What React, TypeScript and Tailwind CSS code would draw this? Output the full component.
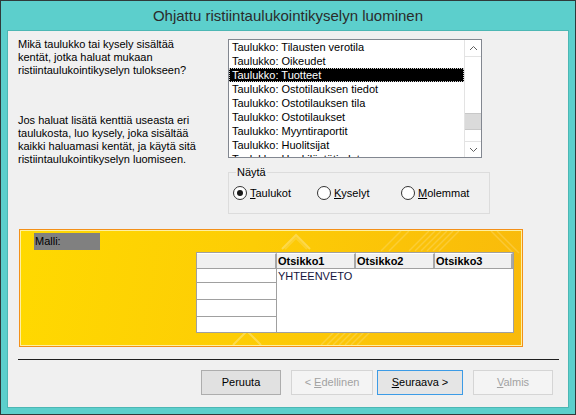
import React from "react";

const tables = [
  "Taulukko: Tilausten verotila",
  "Taulukko: Oikeudet",
  "Taulukko: Tuotteet",
  "Taulukko: Ostotilauksen tiedot",
  "Taulukko: Ostotilauksen tila",
  "Taulukko: Ostotilaukset",
  "Taulukko: Myyntiraportit",
  "Taulukko: Huolitsijat",
  "Taulukko: Henkilöstötiedot",
];

function Chevron({ up }: { up: boolean }) {
  return (
    <svg width="9" height="6" viewBox="0 0 9 6" className="block">
      <path
        d={up ? "M1 5 L4.5 1.5 L8 5" : "M1 1 L4.5 4.5 L8 1"}
        fill="none"
        stroke="#606060"
        strokeWidth="1"
      />
    </svg>
  );
}

function Radio({ checked, hot, rest }: { checked?: boolean; hot: string; rest: string }) {
  return (
    <div className="w-[84px] flex items-center">
      <div className="w-[14px] h-[14px] rounded-full border border-[#333333] bg-white flex items-center justify-center">
        {checked && <div className="w-[6px] h-[6px] rounded-full bg-[#1a1a1a]" />}
      </div>
      <span className="ml-[3px]">
        <u>{hot}</u>
        {rest}
      </span>
    </div>
  );
}

function Button({
  w,
  hot,
  before,
  after,
  kind,
}: {
  w: string;
  hot?: string;
  before?: string;
  after?: string;
  kind: "normal" | "default" | "disabled";
}) {
  const styles =
    kind === "disabled"
      ? "bg-[#f4f4f4] border-[#d5d5d5] text-[#a2a2a2]"
      : kind === "default"
      ? "bg-[#e5e5e5] border-[#3c9be6] text-black"
      : "bg-[#e1e1e1] border-[#adadad] text-black";
  return (
    <div className={`${w} h-[25px] border ${styles} flex items-center justify-center`}>
      <span>
        {before}
        {hot && <u>{hot}</u>}
        {after}
      </span>
    </div>
  );
}

export default function App() {
  return (
    <div className="w-[576px] h-[415px] bg-[#5ccfcc] border border-[#2f3a3a] px-[6px] pb-[6px] flex flex-col overflow-hidden font-['Liberation_Sans',Arial,sans-serif]">
      {/* title bar */}
      <div className="h-[29px] pt-[1px] flex items-center justify-center text-[15px] text-[#2b2b2b]">
        Ohjattu ristiintaulukointikyselyn luominen
      </div>

      {/* client area */}
      <div className="flex-1 border border-[#4cb7b4] bg-[#f0f0f0] flex flex-col text-[11px] text-black">
        <div className="pt-[8px] flex">
          <div className="w-[220px] pl-[10px] leading-[13px]">
            <p className="-mt-[1px]">
              Mikä taulukko tai kysely sisältää
              <br />
              kentät, jotka haluat mukaan
              <br />
              ristiintaulukointikyselyn tulokseen?
            </p>
            <p className="mt-[37px]">
              Jos haluat lisätä kenttiä useasta eri
              <br />
              taulukosta, luo kysely, joka sisältää
              <br />
              kaikki haluamasi kentät, ja käytä sitä
              <br />
              ristiintaulukointikyselyn luomiseen.
            </p>
          </div>

          <div className="w-[254px] flex flex-col">
            {/* list box */}
            <div className="h-[119px] border border-[#828790] bg-white flex">
              <div className="flex-1 overflow-hidden">
                {tables.map((t, i) =>
                  i === 2 ? (
                    <div
                      key={t}
                      className="h-[14px] leading-[12px] pl-[2px] bg-black text-white border border-dotted border-[#d0d0d0] whitespace-nowrap"
                    >
                      {t}
                    </div>
                  ) : (
                    <div key={t} className="h-[14px] leading-[14px] pl-[3px] whitespace-nowrap">
                      {t}
                    </div>
                  )
                )}
              </div>
              <div className="w-[17px] flex flex-col border-l border-[#e3e3e3] bg-white">
                <div className="h-[17px] border-b border-[#e3e3e3] flex items-center justify-center">
                  <Chevron up />
                </div>
                <div className="flex-1 flex flex-col">
                  <div className="mt-[56px] h-[17px] bg-[#dadada] border-y border-[#c8c8c8]" />
                </div>
                <div className="h-[16px] border-t border-[#e3e3e3] flex items-center justify-center">
                  <Chevron up={false} />
                </div>
              </div>
            </div>

            {/* show options */}
            <fieldset className="mt-[8px] border border-[#dcdcdc] px-[4px] pb-[13px]">
              <legend className="ml-[3px] px-[1px] leading-[13px]">Näytä</legend>
              <div className="mt-[7px] h-[14px] flex items-center">
                <Radio checked hot="T" rest="aulukot" />
                <Radio hot="K" rest="yselyt" />
                <Radio hot="M" rest="olemmat" />
              </div>
            </fieldset>
          </div>
        </div>

        {/* sample preview */}
        <div className="mt-[15px] ml-[11px] w-[504px] h-[118px] border border-[#f39019]">
          <div className="relative h-full border border-[#fff0a0] bg-[linear-gradient(100deg,#ffd900_0%,#fdcd05_45%,#f9ba0b_100%)] flex flex-col overflow-hidden">
            <svg className="absolute inset-0" width="500" height="114" viewBox="0 0 500 114">
              <g stroke="#ffffff" strokeOpacity="0.28" strokeWidth="2" fill="none">
                <path d="M261 18 L275 4 L289 18" />
                <path d="M264 18 L275 7 L286 18" strokeOpacity="0.15" />
                <path d="M212 114 L226 100 L240 114" />
              </g>
              <g stroke="#ffffff" strokeOpacity="0.18" strokeWidth="1.5">
                <path d="M360 20 L380 0" />
                <path d="M368 20 L388 0" />
                <path d="M388 20 L408 0" />
                <path d="M394 20 L414 0" />
                <path d="M400 20 L420 0" />
                <path d="M406 20 L426 0" />
                <path d="M412 20 L432 0" />
                <path d="M418 20 L438 0" />
                <path d="M470 0 L492 22" />
                <path d="M476 0 L498 22" />
                <path d="M300 114 L314 100" />
                <path d="M306 114 L320 100" />
                <path d="M312 114 L326 100" />
                <path d="M318 114 L332 100" />
                <path d="M324 114 L338 100" />
                <path d="M330 114 L344 100" />
                <path d="M336 114 L350 100" />
              </g>
            </svg>

            <div className="relative mt-[2px] ml-[13px] w-[66px] h-[17px] bg-[#808080] leading-[17px] pl-[1px]">
              Malli:
            </div>

            {/* sample grid */}
            <div className="relative mt-[2px] ml-auto mr-[7px] w-[318px] h-[81px] border border-[#a0a0a0] bg-white flex flex-col">
              <div className="h-[16px] flex font-bold border-b border-[#a0a0a0]">
                <div className="w-[80px] bg-[#f0f0f0] border-t border-t-white border-r-2 border-r-[#a8a8a8]" />
                <div className="w-[79px] bg-[#f0f0f0] border-t border-t-white border-r-2 border-r-[#a8a8a8] pl-[1px] leading-[15px]">
                  Otsikko1
                </div>
                <div className="w-[79px] bg-[#f0f0f0] border-t border-t-white border-r-2 border-r-[#a8a8a8] pl-[1px] leading-[15px]">
                  Otsikko2
                </div>
                <div className="flex-1 bg-[#f0f0f0] border-t border-t-white border-r-2 border-r-[#a8a8a8] pl-[1px] leading-[15px]">
                  Otsikko3
                </div>
              </div>
              <div className="flex-1 flex">
                <div className="w-[80px] border-r border-[#a0a0a0] flex flex-col">
                  <div className="h-[14px] border-b border-[#a0a0a0]" />
                  <div className="h-[17px] border-b border-[#a0a0a0]" />
                  <div className="h-[17px] border-b border-[#a0a0a0]" />
                  <div className="flex-1" />
                </div>
                <div className="flex-1 pl-[1px] leading-[14px] text-[#14143c]">YHTEENVETO</div>
              </div>
            </div>
          </div>
        </div>

        {/* divider */}
        <div className="mt-[12px] ml-[10px] w-[541px] h-px bg-[#1e1e1e]" />

        {/* buttons */}
        <div className="mt-[10px] flex justify-end pr-[15px]">
          <Button w="w-[80px]" before="Peruuta" kind="normal" />
          <div className="w-[10px]" />
          <Button w="w-[82px]" before="< " hot="E" after="dellinen" kind="disabled" />
          <div className="w-[4px]" />
          <Button w="w-[86px]" hot="S" after="euraava >" kind="default" />
          <div className="w-[10px]" />
          <Button w="w-[80px]" hot="V" after="almis" kind="disabled" />
        </div>
      </div>
    </div>
  );
}
